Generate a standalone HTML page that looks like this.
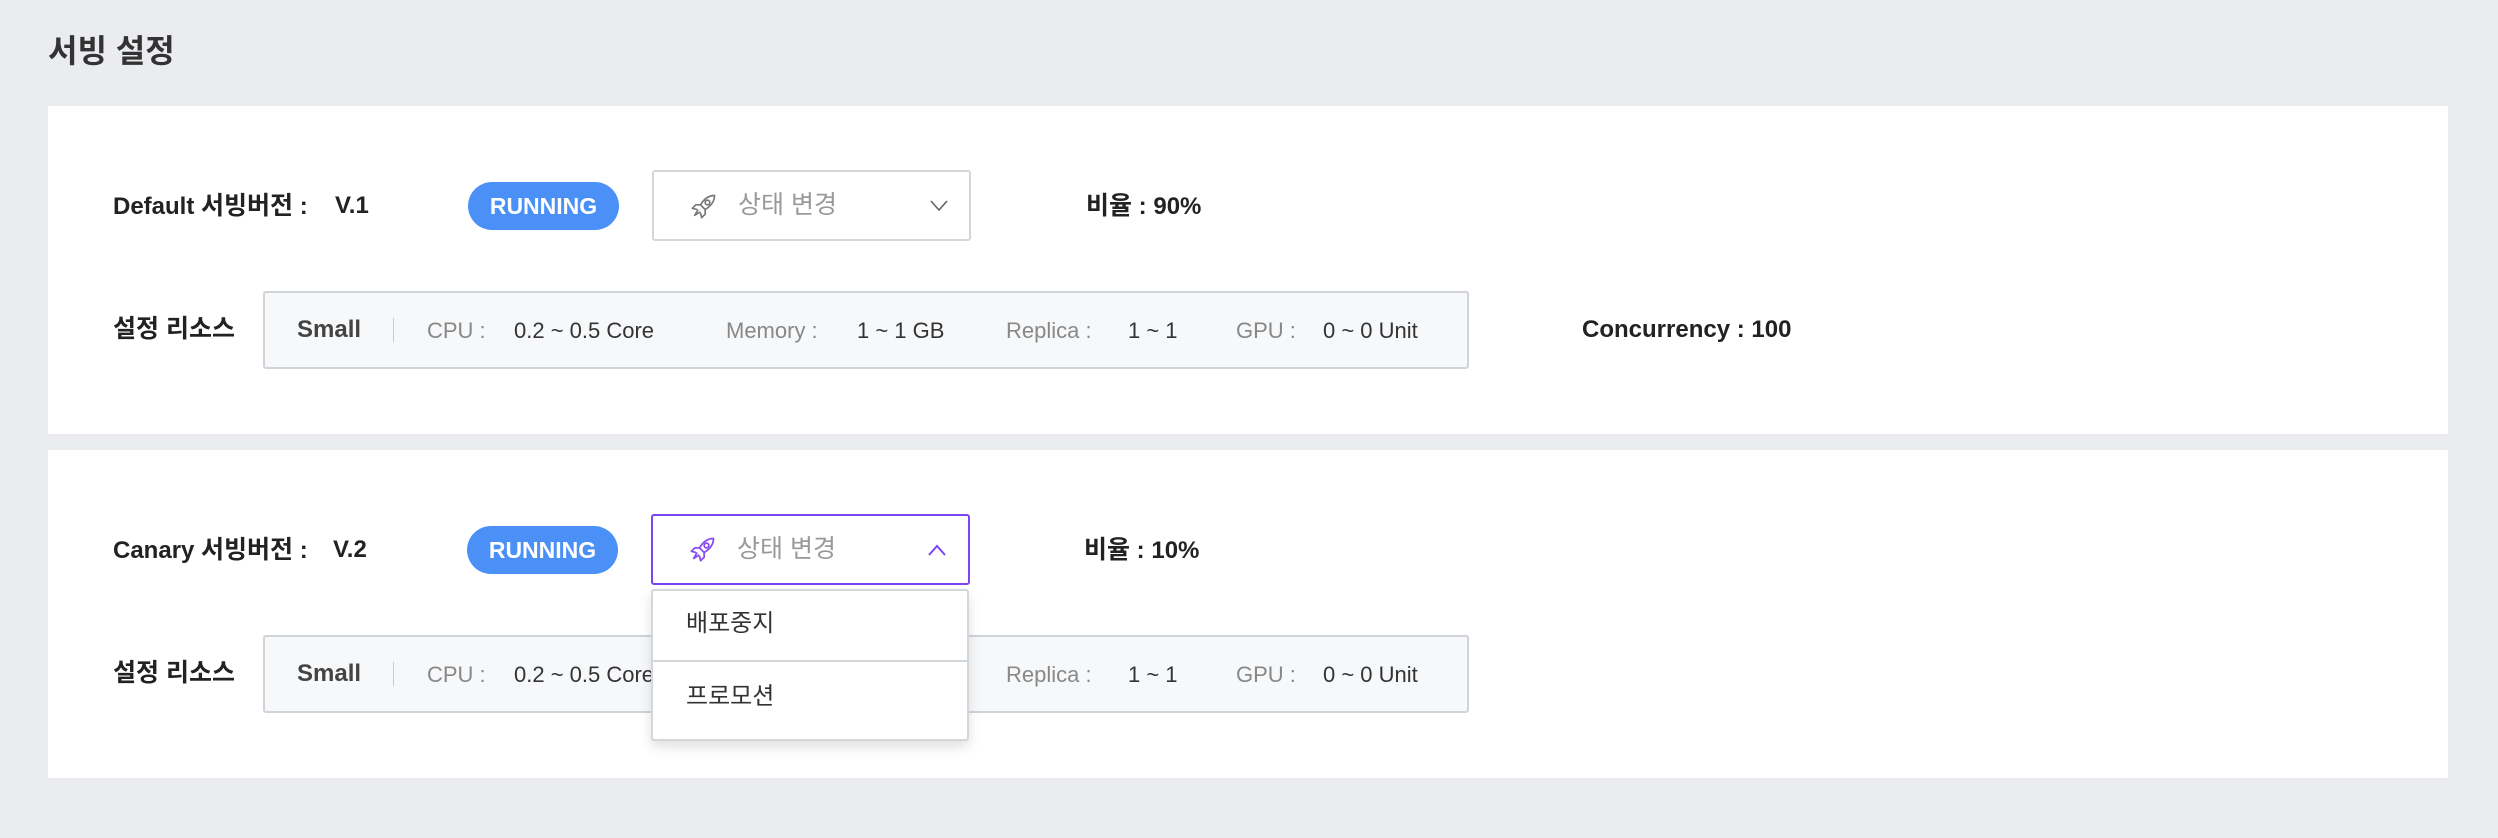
<!DOCTYPE html>
<html><head><meta charset="utf-8"><style>
*{margin:0;padding:0;box-sizing:border-box}
body{width:2498px;height:838px;background:#ebecf0;position:relative;overflow:hidden;font-family:"Liberation Sans","Noto Sans CJK KR",sans-serif;color:#222}
.a{position:absolute;white-space:nowrap;line-height:1}
.card{position:absolute;left:48px;width:2400px;background:#fff}
.b{font-weight:bold;font-size:24px;color:#222}
.k{font-size:25px}
.pill{position:absolute;width:151px;height:48px;border-radius:24px;background:#4a90f7;color:#fff;font-weight:bold;font-size:23px;display:flex;align-items:center;justify-content:center}
.dd{position:absolute;left:652px;width:319px;height:71px;border:2px solid #d3d6da;border-radius:3px;background:#fff}
.res{position:absolute;left:263px;width:1206px;height:78px;background:#f7f8fa;border:2px solid #d0d4d9;border-radius:3px}
.l{color:#888;font-size:22px}.v{color:#333;font-size:22px}
</style></head><body>
<div class="a" style="left:48px;top:35px;font-size:32px;font-weight:bold;color:#333">서빙 설정</div>

<div class="card" style="top:106px;height:328px"></div>
<div class="a b" style="left:113px;top:194px">Default <span class="k">서빙버전</span> :</div>
<div class="a b" style="left:335px;top:194px">V.1</div>
<div class="pill" style="left:468px;top:182px">RUNNING</div>
<div class="dd" style="top:170px">
<svg style="position:absolute;left:36px;top:20px" width="28" height="28" viewBox="0 0 24 24" fill="none" stroke="#777" stroke-width="1.4" stroke-linejoin="round"><path d="M21 3c-5 0-9 3-12 8l4 4c5-3 8-7 8-12z"/><circle cx="15" cy="9" r="2"/><path d="M9 11l-4 0-3 3 4 1M13 15l0 4-3 3-1-4M7 15l-3 5 5-3"/></svg>
<div class="a" style="left:84px;top:21px;font-size:25px;color:#999">상태 변경</div>
<svg style="position:absolute;left:275px;top:28px" width="20" height="12" viewBox="0 0 20 12" fill="none" stroke="#666" stroke-width="1.6"><path d="M2 1l8 9 8-9"/></svg>
</div>
<div class="a b" style="left:1086px;top:194px"><span class="k">비율</span> : 90%</div>
<div class="a b k" style="left:113px;top:317px">설정 리소스</div>
<div class="res" style="top:291px"></div>
<div class="a" style="left:297px;top:318px;font-size:24px;font-weight:bold;color:#444">Small</div>
<div class="a" style="left:393px;top:318px;width:1px;height:24px;background:#ccc"></div>
<div class="a l" style="left:427px;top:320px">CPU :</div><div class="a v" style="left:514px;top:320px">0.2 ~ 0.5 Core</div>
<div class="a l" style="left:726px;top:320px">Memory :</div><div class="a v" style="left:857px;top:320px">1 ~ 1 GB</div>
<div class="a l" style="left:1006px;top:320px">Replica :</div><div class="a v" style="left:1128px;top:320px">1 ~ 1</div>
<div class="a l" style="left:1236px;top:320px">GPU :</div><div class="a v" style="left:1323px;top:320px">0 ~ 0 Unit</div>
<div class="a b" style="left:1582px;top:318px">Concurrency : 100</div>

<div class="card" style="top:450px;height:328px"></div>
<div class="a b" style="left:113px;top:538px">Canary <span class="k">서빙버전</span> :</div>
<div class="a b" style="left:333px;top:538px">V.2</div>
<div class="pill" style="left:467px;top:526px">RUNNING</div>
<div class="a b" style="left:1084px;top:538px"><span class="k">비율</span> : 10%</div>
<div class="a b k" style="left:113px;top:661px">설정 리소스</div>
<div class="res" style="top:635px"></div>
<div class="a" style="left:297px;top:662px;font-size:24px;font-weight:bold;color:#444">Small</div>
<div class="a" style="left:393px;top:662px;width:1px;height:24px;background:#ccc"></div>
<div class="a l" style="left:427px;top:664px">CPU :</div><div class="a v" style="left:514px;top:664px">0.2 ~ 0.5 Core</div>
<div class="a l" style="left:1006px;top:664px">Replica :</div><div class="a v" style="left:1128px;top:664px">1 ~ 1</div>
<div class="a l" style="left:1236px;top:664px">GPU :</div><div class="a v" style="left:1323px;top:664px">0 ~ 0 Unit</div>

<div class="dd" style="top:514px;left:651px;border-color:#7c45f0">
<svg style="position:absolute;left:36px;top:19px" width="28" height="28" viewBox="0 0 24 24" fill="none" stroke="#8a4af3" stroke-width="1.5" stroke-linejoin="round"><path d="M21 3c-5 0-9 3-12 8l4 4c5-3 8-7 8-12z"/><circle cx="15" cy="9" r="2"/><path d="M9 11l-4 0-3 3 4 1M13 15l0 4-3 3-1-4M7 15l-3 5 5-3"/></svg>
<div class="a" style="left:84px;top:21px;font-size:25px;color:#999">상태 변경</div>
<svg style="position:absolute;left:274px;top:28px" width="20" height="12" viewBox="0 0 20 12" fill="none" stroke="#7c45f0" stroke-width="2"><path d="M2 11l8-9 8 9"/></svg>
</div>
<div class="a" style="left:651px;top:589px;width:318px;height:152px;background:#fff;border:2px solid #d3d6da;border-radius:3px;box-shadow:0 6px 12px rgba(0,0,0,.12)"></div>
<div class="a" style="left:652px;top:660px;width:316px;height:2px;background:#d3d6da"></div>
<div class="a" style="left:686px;top:612px;font-size:24px;color:#333">배포중지</div>
<div class="a" style="left:686px;top:685px;font-size:24px;color:#333">프로모션</div>
</body></html>
